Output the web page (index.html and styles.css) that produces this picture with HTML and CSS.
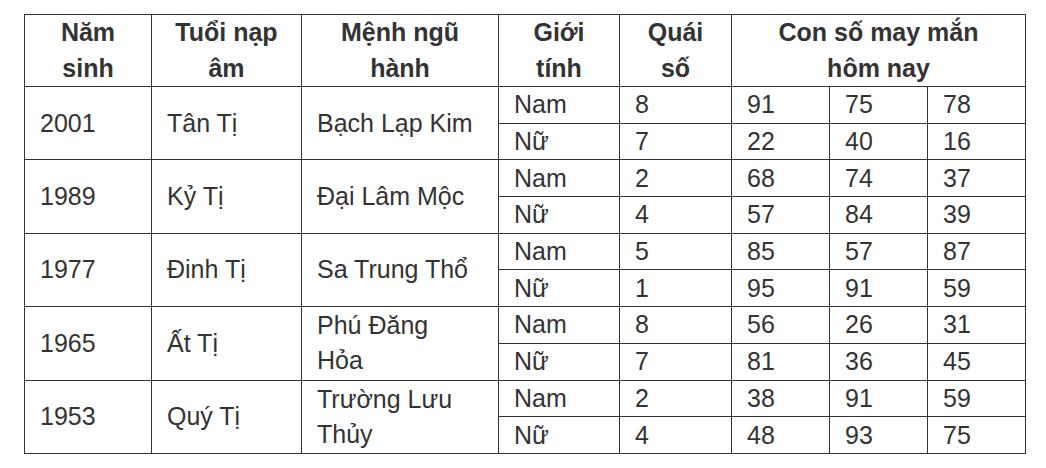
FILE: index.html
```html
<!DOCTYPE html>
<html lang="vi">
<head>
<meta charset="utf-8">
<title>Con số may mắn</title>
<link rel="stylesheet" href="styles.css">
</head>
<body>
<div class="wrap">
<table class="lucky">
<colgroup>
<col class="c1"><col class="c2"><col class="c3"><col class="c4"><col class="c5"><col class="c6"><col class="c7"><col class="c8">
</colgroup>
<thead>
<tr>
<th>Năm sinh</th>
<th>Tuổi nạp âm</th>
<th>Mệnh ngũ hành</th>
<th>Giới tính</th>
<th>Quái số</th>
<th colspan="3">Con số may mắn hôm nay</th>
</tr>
</thead>
<tbody>
<tr><td rowspan="2">2001</td><td rowspan="2">Tân Tị</td><td rowspan="2">Bạch Lạp Kim</td><td>Nam</td><td>8</td><td>91</td><td>75</td><td>78</td></tr>
<tr><td>Nữ</td><td>7</td><td>22</td><td>40</td><td>16</td></tr>
<tr><td rowspan="2">1989</td><td rowspan="2">Kỷ Tị</td><td rowspan="2">Đại Lâm Mộc</td><td>Nam</td><td>2</td><td>68</td><td>74</td><td>37</td></tr>
<tr><td>Nữ</td><td>4</td><td>57</td><td>84</td><td>39</td></tr>
<tr><td rowspan="2">1977</td><td rowspan="2">Đinh Tị</td><td rowspan="2">Sa Trung Thổ</td><td>Nam</td><td>5</td><td>85</td><td>57</td><td>87</td></tr>
<tr><td>Nữ</td><td>1</td><td>95</td><td>91</td><td>59</td></tr>
<tr><td rowspan="2">1965</td><td rowspan="2">Ất Tị</td><td rowspan="2">Phú Đăng Hỏa</td><td>Nam</td><td>8</td><td>56</td><td>26</td><td>31</td></tr>
<tr><td>Nữ</td><td>7</td><td>81</td><td>36</td><td>45</td></tr>
<tr><td rowspan="2">1953</td><td rowspan="2">Quý Tị</td><td rowspan="2">Trường Lưu Thủy</td><td>Nam</td><td>2</td><td>38</td><td>91</td><td>59</td></tr>
<tr><td>Nữ</td><td>4</td><td>48</td><td>93</td><td>75</td></tr>
</tbody>
</table>
</div>
</body>
</html>
```

FILE: styles.css
```css
html, body {
  margin: 0;
  padding: 0;
  background: #ffffff;
}
.wrap {
  padding: 14px 0 0 24px;
}
.lucky {
  border-collapse: collapse;
  table-layout: fixed;
  width: 1002px;
  font-family: "Liberation Sans", Arial, sans-serif;
  font-size: 25px;
  color: #333333;
}
.c1 { width: 127px; }
.c2 { width: 150px; }
.c3 { width: 197px; }
.c4 { width: 121px; }
.c5 { width: 112px; }
.c6 { width: 98px; }
.c7 { width: 98px; }
.c8 { width: 98px; }
.lucky th,
.lucky td {
  border: 1px solid #333333;
  vertical-align: middle;
}
.lucky th {
  padding: 0 18px;
  font-weight: bold;
  text-align: center;
  line-height: 35.5px;
  height: 71px;
}
.lucky td {
  padding: 0 20px 0 15px;
  text-align: left;
  line-height: 35px;
  height: 35.7px;
}
```
